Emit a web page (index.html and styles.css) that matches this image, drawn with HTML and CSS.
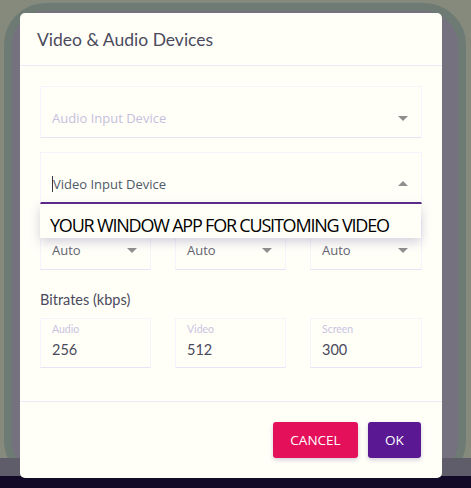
FILE: index.html
```html
<!DOCTYPE html>
<html>
<head>
<meta charset="utf-8">
<link rel="stylesheet" href="styles.css">
</head>
<body>
<div class="backdrop"></div>
<div class="backdrop-strip"></div>
<div class="backdrop-floor"></div>
<div class="dialog">
  <div class="dialog-header">Video &amp; Audio Devices</div>
  <div class="dialog-content">
    <div class="field">
      <span class="field-text placeholder">Audio Input Device</span>
      <span class="arrow down"></span>
    </div>
    <div class="field active">
      <span class="field-text value"><span class="caret"></span>Video Input Device</span>
      <span class="arrow up"></span>
      <div class="popup">YOUR WINDOW APP FOR CUSITOMING VIDEO</div>
    </div>
    <div class="row">
      <div class="field small"><span class="field-text auto">Auto</span><span class="arrow down"></span></div>
      <div class="field small"><span class="field-text auto">Auto</span><span class="arrow down"></span></div>
      <div class="field small"><span class="field-text auto">Auto</span><span class="arrow down"></span></div>
    </div>
    <div class="section-title">Bitrates (kbps)</div>
    <div class="row">
      <div class="num-field"><span class="num-label">Audio</span><span class="num-value">256</span></div>
      <div class="num-field"><span class="num-label">Video</span><span class="num-value">512</span></div>
      <div class="num-field"><span class="num-label">Screen</span><span class="num-value">300</span></div>
    </div>
  </div>
  <div class="dialog-footer">
    <button class="btn cancel">CANCEL</button>
    <button class="btn ok">OK</button>
  </div>
</div>
</body>
</html>
```
FILE: styles.css
```css
html, body {
  margin: 0;
  padding: 0;
}
body {
  width: 471px;
  height: 488px;
  overflow: hidden;
  background: #858a7c;
  position: relative;
  padding: 13px 0 0 20px;
  box-sizing: border-box;
}
.backdrop {
  position: absolute;
  left: 4px;
  top: 3px;
  width: 462px;
  height: 480px;
  box-sizing: border-box;
  border: 8px solid #6e7b74;
  background: #76717f;
  border-radius: 42px;
}
.backdrop-strip {
  position: absolute;
  left: 0;
  top: 458px;
  width: 471px;
  height: 19px;
  background: #5f5d69;
}
.backdrop-floor {
  position: absolute;
  left: 0;
  top: 476px;
  width: 471px;
  height: 12px;
  background: #130a28;
}
.dialog {
  position: relative;
  width: 422px;
  height: 465px;
  background: #fffff8;
  border-radius: 5px;
  display: flex;
  flex-direction: column;
  font-family: Lato, "Open Sans", sans-serif;
}
.dialog-header {
  height: 53px;
  box-sizing: border-box;
  border-bottom: 1px solid #ece9f8;
  display: flex;
  align-items: center;
  padding-left: 17px;
  font-size: 17.5px;
  color: #4b4a5c;
}
.dialog-content {
  padding: 20px 20px 33px 20px;
  border-bottom: 1px solid #ece9f8;
  display: flex;
  flex-direction: column;
}
.field {
  position: relative;
  height: 52px;
  box-sizing: border-box;
  border: 1px solid #f5f3fb;
  border-bottom: 1px solid #e8e4f6;
  margin-bottom: 14px;
  display: flex;
  align-items: center;
  padding: 12px 0 0 11px;
}
.field.active {
  border-bottom: 2px solid #5a2a88;
  padding-top: 12px;
}
.field-text {
  font-family: "Open Sans", sans-serif;
  font-size: 13px;
  flex: 1;
}
.placeholder { color: #c6c0dd; }
.value { color: #4f5968; position: relative; }
.caret {
  display: inline-block;
  width: 1px;
  height: 16px;
  background: #3a3a44;
  vertical-align: -3px;
  margin-right: 0;
}
.auto { color: #636370; }
.arrow {
  width: 0;
  height: 0;
  margin-right: 13px;
  border-left: 5px solid transparent;
  border-right: 5px solid transparent;
}
.arrow.down { border-top: 5px solid #8f8f8f; }
.arrow.up { border-bottom: 5px solid #8f8f8f; }
.popup {
  position: absolute;
  left: -1px;
  top: 51px;
  width: 381px;
  height: 34px;
  background: #fffff8;
  box-shadow: 0 4px 10px rgba(110, 100, 160, 0.3);
  z-index: 5;
  display: flex;
  align-items: center;
  padding: 7px 0 0 10px;
  box-sizing: border-box;
  font-family: "Open Sans", sans-serif;
  font-size: 18px;
  letter-spacing: -1.2px;
  color: #000;
}
.row {
  display: grid;
  grid-template-columns: 111px 111px 112px;
  column-gap: 24px;
}
.row .field { margin-bottom: 0; }
.section-title {
  margin-top: 22px;
  margin-bottom: 10px;
  font-size: 14.5px;
  color: #4b4a5c;
  line-height: 16px;
}
.num-field {
  height: 50px;
  box-sizing: border-box;
  border: 1px solid #f5f3fb;
  border-bottom: 1px solid #e8e4f6;
  display: flex;
  flex-direction: column;
  padding: 3px 0 0 11px;
}
.num-label {
  font-size: 10.5px;
  color: #cac3e0;
  line-height: 14px;
}
.num-value {
  margin-top: 5px;
  font-size: 14.5px;
  color: #4b4a5c;
  line-height: 18px;
}
.dialog-footer {
  flex: 1;
  display: flex;
  justify-content: flex-end;
  align-items: flex-start;
  padding: 20px 21px 0 0;
  gap: 10px;
}
.btn {
  height: 36px;
  border: none;
  border-radius: 3px;
  color: #fff;
  font-family: "Open Sans", sans-serif;
  font-size: 13.5px;
  padding: 0;
  box-shadow: 0 2px 4px rgba(90, 60, 140, 0.25);
}
.cancel { width: 85px; background: #e5105a; }
.ok { width: 53px; background: #5a1892; }
```
